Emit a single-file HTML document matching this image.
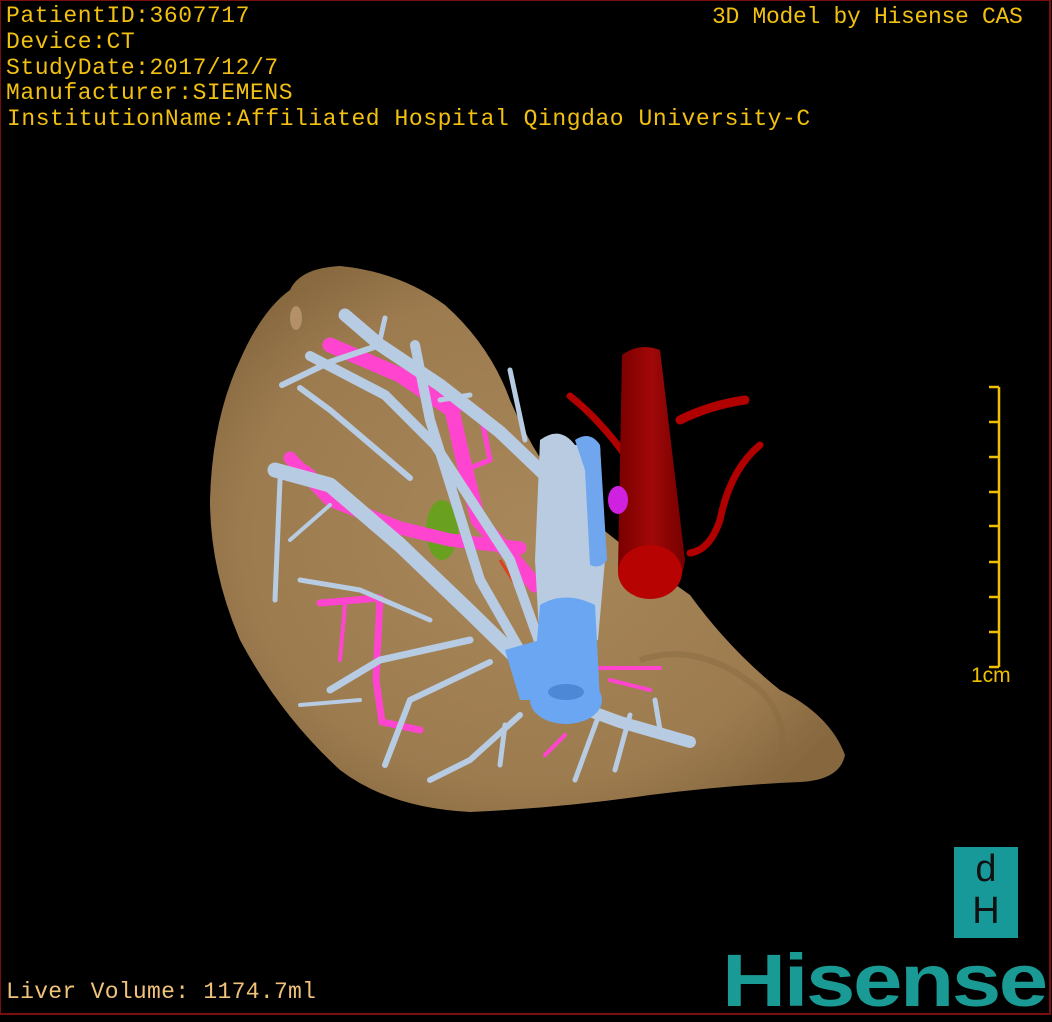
<!DOCTYPE html>
<html><head><meta charset="utf-8"><style>
html,body{margin:0;padding:0;background:#000;}
body{width:1052px;height:1020px;position:relative;overflow:hidden;}
.frame{position:absolute;left:0;top:0;width:1048px;height:1012px;border:1px solid #7a0d0d;border-right-width:2px;border-bottom-width:2px;}
.t{position:absolute;font-family:"Liberation Mono",monospace;font-size:23px;color:#f2c010;letter-spacing:0.55px;white-space:pre;line-height:26px;}
</style></head><body>
<svg width="1052" height="1020" style="position:absolute;left:0;top:0">
<defs>
<radialGradient id="lv" cx="0.5" cy="0.5" r="0.6">
<stop offset="0" stop-color="#a8875a"/><stop offset="0.75" stop-color="#9c7b4f"/><stop offset="1" stop-color="#86673e"/>
</radialGradient>
<linearGradient id="ao" x1="0" x2="1"><stop offset="0" stop-color="#7a0000"/><stop offset="0.5" stop-color="#a00808"/><stop offset="1" stop-color="#760000"/></linearGradient>
</defs>
<path d="M290,290 Q300,268 340,266 Q400,272 445,305 Q490,345 510,400 Q540,470 585,515 Q640,560 690,595 Q730,650 780,690 Q830,715 845,755 Q840,780 800,782 Q730,785 650,795 Q560,808 470,812 Q390,808 340,770 Q280,715 240,640 Q210,570 210,500 Q212,420 240,360 Q262,310 290,290Z" fill="url(#lv)"/>
<path d="M640,660 Q700,640 760,690 Q790,720 780,760" fill="none" stroke="#8a6a40" stroke-width="6" opacity="0.5"/>
<ellipse cx="296" cy="318" rx="6" ry="12" fill="#b39068"/>
<g fill="none" stroke="#b00000" stroke-linecap="round">
<path d="M570,396 Q600,420 625,455" stroke-width="7"/>
<path d="M680,420 Q710,405 745,400" stroke-width="9"/>
<path d="M760,445 Q730,470 720,520 Q710,550 690,553" stroke-width="7"/>
</g>
<path d="M622,355 Q640,342 660,350 L685,560 Q680,598 650,597 Q620,595 618,570 Z" fill="url(#ao)"/>
<ellipse cx="650" cy="572" rx="32" ry="27" fill="#b80303"/>
<ellipse cx="618" cy="500" rx="10" ry="14" fill="#d020e0"/>
<ellipse cx="442" cy="530" rx="16" ry="30" fill="#6aa020"/>
<g fill="none" stroke="#ff44d0" stroke-linecap="round" stroke-linejoin="round">
<path d="M330,345 L400,375 L452,410 L462,455 L478,520 L510,555 L535,585" stroke-width="15"/>
<path d="M290,458 L330,500 L400,528 L450,540 L520,548" stroke-width="13"/>
<path d="M290,458 L310,470 L340,500" stroke-width="5"/>
<path d="M455,408 L480,410 L490,460 L465,470" stroke-width="5"/>
<path d="M320,603 L380,598 L376,680 L382,722 L420,730" stroke-width="7"/>
<path d="M345,605 L340,660" stroke-width="4"/>
<path d="M600,668 L660,668 M610,680 L650,690 M545,755 L565,735" stroke-width="4"/>
</g>
<path d="M500,560 L525,600" stroke="#e04020" stroke-width="3" fill="none"/>
<g fill="none" stroke="#b7cbe2" stroke-linecap="round" stroke-linejoin="round">
<path d="M560,700 L470,612 L400,545 L330,485 L275,470" stroke-width="15"/>
<path d="M560,700 L510,560 L435,445 L385,395 L310,356" stroke-width="10"/>
<path d="M345,315 L380,345 L440,385 L500,432 L545,475" stroke-width="13"/>
<path d="M380,345 L330,362 L282,385" stroke-width="6"/>
<path d="M380,340 L385,318" stroke-width="5"/>
<path d="M415,345 L430,420 L455,500 L480,580 L520,650" stroke-width="10"/>
<path d="M410,478 L330,410 L300,388" stroke-width="6"/>
<path d="M470,640 L380,660 L330,690" stroke-width="7"/>
<path d="M490,662 L410,700 L385,765" stroke-width="6"/>
<path d="M440,400 L470,395" stroke-width="5"/>
<path d="M280,480 L275,600" stroke-width="5"/>
<path d="M330,505 L290,540" stroke-width="4"/>
<path d="M430,620 L360,590 L300,580" stroke-width="5"/>
<path d="M560,700 L620,722 L690,742" stroke-width="12"/>
<path d="M655,700 L660,730 M630,715 L615,770 M600,712 L575,780" stroke-width="5"/>
<path d="M520,715 L470,760 L430,780" stroke-width="6"/>
<path d="M505,725 L500,765" stroke-width="5"/>
<path d="M360,700 L300,705" stroke-width="4"/>
<path d="M510,370 L525,440" stroke-width="5"/>
</g>
<path d="M540,440 Q560,425 575,445 L600,445 L605,560 L598,640 L540,650 L535,560 Z" fill="#b9cbe0"/>
<path d="M575,440 Q590,430 600,445 L607,560 Q600,570 590,565 L585,470 Z" fill="#6fa6ee"/>
<path d="M540,605 Q565,590 595,605 L600,700 L532,700 Z" fill="#6aa6f2"/>
<path d="M505,650 L540,640 L545,700 L520,700 Z" fill="#6aa6f2"/>
<ellipse cx="566" cy="700" rx="36" ry="24" fill="#6aa6f2"/>
<ellipse cx="566" cy="692" rx="18" ry="8" fill="#4d88d6"/>
</svg>
<div class="frame"></div>
<div class="t" style="left:6px;top:3px">PatientID:3607717</div>
<div class="t" style="left:6px;top:29px">Device:CT</div>
<div class="t" style="left:6px;top:55px">StudyDate:2017/12/7</div>
<div class="t" style="left:6px;top:80px">Manufacturer:SIEMENS</div>
<div class="t" style="left:7px;top:106px">InstitutionName:Affiliated Hospital Qingdao University-C</div>
<div class="t" style="left:712px;top:4px;letter-spacing:-0.3px">3D Model by Hisense CAS</div>
<div class="t" style="left:6px;top:979px;color:#f0c27a;letter-spacing:0.3px">Liver Volume: 1174.7ml</div>
<svg width="40" height="300" style="position:absolute;left:985px;top:380px">
<g stroke="#f0c000" stroke-width="2.5" fill="none">
<path d="M14,7 L14,287"/>
<path d="M4,7H14M4,42H14M4,77H14M4,112H14M4,146H14M4,182H14M4,217H14M4,252H14M4,287H14"/>
</g></svg>
<div style="position:absolute;left:971px;top:664px;font-family:'Liberation Sans',sans-serif;font-size:21px;color:#f0c000">1cm</div>
<div style="position:absolute;left:954px;top:847px;width:64px;height:91px;background:#17999a;font-family:'Liberation Sans',sans-serif;color:#111;text-align:center">
<div style="font-size:38px;line-height:40px;margin-top:2px">d</div>
<div style="font-size:38px;line-height:44px">H</div>
</div>
<div style="position:absolute;left:722px;top:941px;font-family:'Liberation Sans',sans-serif;font-weight:bold;font-size:74px;color:#1a9a94;transform:scaleX(1.2);transform-origin:left top;letter-spacing:-2px;line-height:80px">Hisense</div>
</body></html>
